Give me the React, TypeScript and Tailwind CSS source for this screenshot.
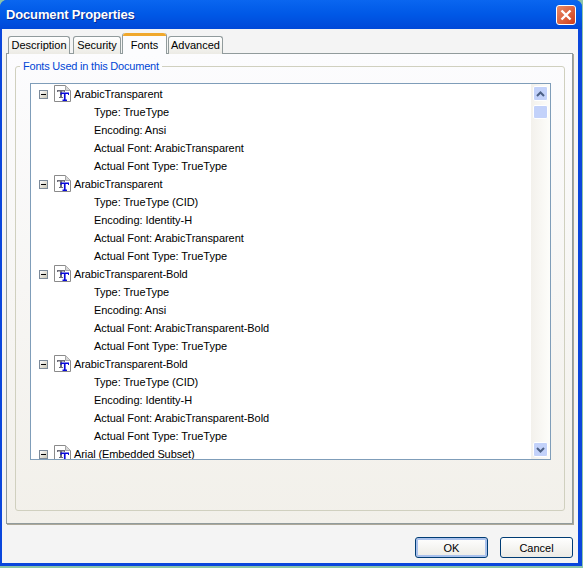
const font = "[font-family:'Liberation_Sans',Tahoma,sans-serif]";

const groups = [
  { name: "ArabicTransparent", rows: ["Type: TrueType", "Encoding: Ansi", "Actual Font: ArabicTransparent", "Actual Font Type: TrueType"] },
  { name: "ArabicTransparent", rows: ["Type: TrueType (CID)", "Encoding: Identity-H", "Actual Font: ArabicTransparent", "Actual Font Type: TrueType"] },
  { name: "ArabicTransparent-Bold", rows: ["Type: TrueType", "Encoding: Ansi", "Actual Font: ArabicTransparent-Bold", "Actual Font Type: TrueType"] },
  { name: "ArabicTransparent-Bold", rows: ["Type: TrueType (CID)", "Encoding: Identity-H", "Actual Font: ArabicTransparent-Bold", "Actual Font Type: TrueType"] },
  { name: "Arial (Embedded Subset)", rows: [] as string[] },
];

function FontIcon() {
  return (
    <svg width="17" height="17" viewBox="0 0 17 17" className="block shrink-0 -translate-y-px">
      <path d="M0.5 0.5H11.5L16.5 5.5V16.5H0.5Z" fill="#fff" stroke="#8a8a8a" />
      <path d="M11.5 0.5V5.5H16.5" fill="#d8d8d8" stroke="#a8a8a8" />
      <path d="M3 5H11V7H10V6.5H8V12H9V13H5V12H6V6.5H4V7H3Z" fill="#6d6d78" />
      <path d="M6.5 7.5H15V10H14V9H11.6V14.5H13V16H8.5V14.5H9.9V9H7.6V10H6.5Z" fill="#0a0ad8" />
    </svg>
  );
}

function Minus() {
  return (
    <span className="flex h-[9px] w-[9px] shrink-0 items-center justify-center border border-[#7c8a99] bg-gradient-to-br from-white to-[#c8c4b4]">
      <span className="h-px w-[5px] bg-black" />
    </span>
  );
}

function Row({ children }: { children: string }) {
  return <div className="flex h-[18px] items-center whitespace-nowrap pl-[63px] tracking-[-0.05px]">{children}</div>;
}

function ScrollButton({ up }: { up: boolean }) {
  return (
    <div className="flex h-[15px] w-[15px] shrink-0 items-center justify-center rounded-[2px] border border-white bg-[#c3d2fa]">
      <svg width="9" height="6" viewBox="0 0 9 6">
        <path d={up ? "M1 5L4.5 1.5L8 5" : "M1 1L4.5 4.5L8 1"} fill="none" stroke="#4d6185" strokeWidth="2" />
      </svg>
    </div>
  );
}

function Tab({ label, w }: { label: string; w: string }) {
  return (
    <div className={`${w} mt-[3px] flex h-[18px] items-center justify-center rounded-t-[3px] border border-b-0 border-[#919b9c] bg-gradient-to-b from-white to-[#ecebe5]`}>
      {label}
    </div>
  );
}

function Btn({ label, active }: { label: string; active?: boolean }) {
  return (
    <div className={`flex h-[21px] w-[73px] items-center justify-center rounded-[3px] border border-[#003c74] bg-gradient-to-b from-white to-[#ecebe5] pt-px text-black ${active ? "shadow-[inset_0_0_0_2px_#a9c1ec]" : ""}`}>
      {label}
    </div>
  );
}

export default function App() {
  return (
    <div className={`${font} h-[568px] w-[583px] overflow-hidden bg-[#8cc4a8] text-[11px] text-black`}>
      <div className="flex h-[566px] w-[582px] flex-col rounded-t-[7px] bg-[#0a46dc]">
        <div className="flex h-[29px] shrink-0 items-center justify-between rounded-t-[7px] bg-gradient-to-b from-[#0a66f0] via-[#0058e6] to-[#0048d8] pl-[6px] pr-[6px]">
          <span className="text-[13px] font-bold tracking-[-0.15px] text-white [text-shadow:1px_1px_0_#0a2a90]">Document Properties</span>
          <div className="flex h-[20px] w-[20px] items-center justify-center rounded-[3px] border border-white bg-gradient-to-br from-[#e88a66] to-[#cf3a14]">
            <svg width="12" height="12" viewBox="0 0 12 12">
              <path d="M1.5 1.5L10.5 10.5M10.5 1.5L1.5 10.5" stroke="#fff" strokeWidth="2.4" />
            </svg>
          </div>
        </div>
        <div className="ml-[2px] mr-[4px] flex min-h-0 flex-1 flex-col bg-[#f4f4f4] pl-[4px] pr-[5px] pt-[4px]">
          <div className="z-10 -mb-px flex h-[21px] shrink-0 items-start gap-px pl-[2px]">
            <Tab label="Description" w="w-[62px] mr-[2px]" />
            <Tab label="Security" w="w-[48px]" />
            <div className="flex h-[21px] w-[45px] flex-col rounded-t-[3px] border-x border-[#919b9c] bg-[#fcfcfe]">
              <div className="h-[3px] rounded-t-[3px] bg-[#f0a82c]" />
              <div className="flex flex-1 items-center justify-center">Fonts</div>
            </div>
            <Tab label="Advanced" w="w-[55px]" />
          </div>
          <div className="flex h-[471px] shrink-0 flex-col border border-[#919b9c] bg-gradient-to-b from-[#fcfcfe] to-[#f2f0ea] pl-[8px] pr-[7px] pt-[6px] shadow-[1px_1px_0_#aca899]">
            <fieldset className="h-[451px] min-w-0 rounded-[3px] border border-[#d0d0bf] pl-[14px] pr-[13px]">
              <legend className="-ml-[10px] px-[3px] leading-[13px] tracking-[-0.2px] text-[#0046d5]">Fonts Used in this Document</legend>
              <div className="mt-[10px] flex h-[377px] border border-[#7f9db9] bg-white">
                <div className="min-w-0 flex-1 overflow-hidden pt-px">
                  {groups.map((g, i) => (
                    <div key={i}>
                      <div className="flex h-[18px] items-center whitespace-nowrap pl-[8px] tracking-[-0.1px]">
                        <Minus />
                        <span className="ml-[6px] mr-[3px]"><FontIcon /></span>
                        {g.name}
                      </div>
                      {g.rows.map((r, j) => <Row key={j}>{r}</Row>)}
                    </div>
                  ))}
                </div>
                <div className="flex w-[19px] shrink-0 flex-col items-start bg-gradient-to-r from-[#f3f1ec] to-[#fdfdfa] py-[2px] pl-[2px]">
                  <ScrollButton up />
                  <div className="mt-[4px] h-[14px] w-[15px] shrink-0 rounded-[2px] border border-white bg-[#c3d2fa]" />
                  <div className="flex-1" />
                  <ScrollButton up={false} />
                </div>
              </div>
            </fieldset>
          </div>
          <div className="flex flex-1 items-start justify-end gap-[12px] pt-[13px]">
            <Btn label="OK" active />
            <Btn label="Cancel" />
          </div>
        </div>
        <div className="h-[3px] shrink-0" />
      </div>
    </div>
  );
}
